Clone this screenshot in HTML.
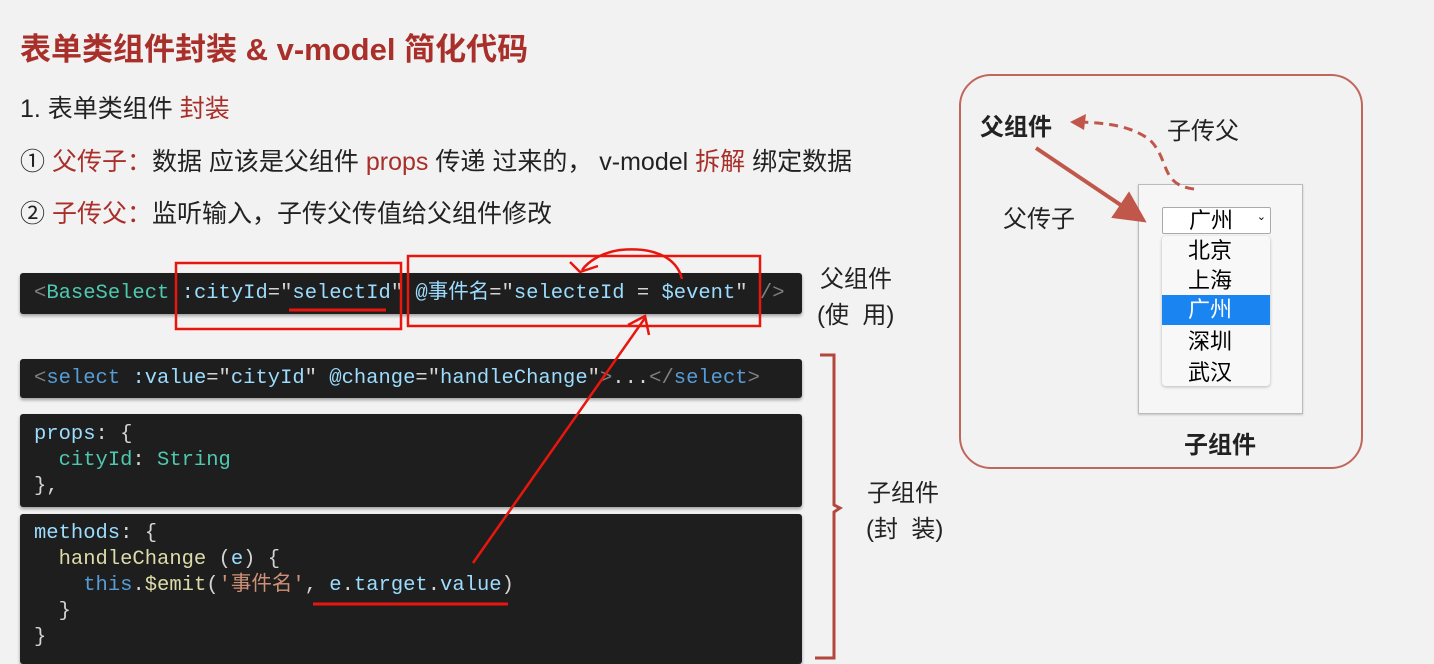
<!DOCTYPE html>
<html><head><meta charset="utf-8"><style>
body{margin:0;width:1434px;height:661px;background:#f2f2f2;position:relative;overflow:hidden;font-family:"Liberation Sans","Noto Sans CJK SC",sans-serif;}
.a{position:absolute;white-space:pre;}
.t{font-size:25px;color:#222;}
.r{color:#a9302a;}
.code{position:absolute;left:20px;width:782px;background:#1e1e1e;box-shadow:0 2px 3px rgba(0,0,0,.35);border-radius:3px;}
.m{position:absolute;left:14px;font-family:"Liberation Mono","Noto Sans CJK SC",monospace;font-size:20.5px;color:#d4d4d4;white-space:pre;line-height:26px;}
.tg{color:#808080}.cp{color:#4ec9b0}.at{color:#9cdcfe}.st{color:#ce9178}.kw{color:#569cd6}.fn{color:#dcdcaa}.sv{color:#9cdcfe}.q{color:#d4d4d4}
</style></head><body>
<div class="a r" style="left:20px;top:24px;font-size:31px;font-weight:bold;">表单类组件封装 &amp; v-model 简化代码</div>
<div class="a t" style="left:20px;top:89px;">1. 表单类组件 <span class="r">封装</span></div>
<div class="a t" style="left:20px;top:142px;">① <span class="r">父传子：</span>数据 应该是父组件 <span class="r">props</span> 传递 过来的， v-model <span class="r">拆解</span> 绑定数据</div>
<div class="a t" style="left:20px;top:194px;">② <span class="r">子传父：</span>监听输入，子传父传值给父组件修改</div>

<div class="code" style="top:273px;height:41px;"><div class="m" style="top:8px;"><span class="tg">&lt;</span><span class="cp">BaseSelect</span> <span class="at">:cityId</span>="<span class="at">selectId</span>" <span class="at">@事件名</span>="<span class="at">selecteId</span> = <span class="at">$event</span>" <span class="tg">/&gt;</span></div></div>
<div class="code" style="top:359px;height:39px;"><div class="m" style="top:7px;"><span class="tg">&lt;</span><span class="kw">select</span> <span class="at">:value</span>="<span class="at">cityId</span>" <span class="at">@change</span>="<span class="at">handleChange</span>"<span class="tg">&gt;</span>...<span class="tg">&lt;/</span><span class="kw">select</span><span class="tg">&gt;</span></div></div>
<div class="code" style="top:414px;height:93px;"><div class="m" style="top:8px;"><span class="sv">props</span>: {
  <span class="cp">cityId</span>: <span class="cp">String</span>
},</div></div>
<div class="code" style="top:514px;height:150px;"><div class="m" style="top:7px;"><span class="sv">methods</span>: {
  <span class="fn">handleChange</span> (<span class="sv">e</span>) {
    <span class="kw">this</span>.<span class="fn">$emit</span>(<span class="st">'事件名'</span>, <span class="sv">e</span>.<span class="sv">target</span>.<span class="sv">value</span>)
  }
}</div></div>

<div class="a t" style="left:820px;top:259px;font-size:24px;">父组件</div>
<div class="a t" style="left:817px;top:295px;font-size:24px;">(使  用)</div>
<div class="a t" style="left:867px;top:473px;font-size:24px;">子组件</div>
<div class="a t" style="left:866px;top:509px;font-size:24px;">(封  装)</div>

<div class="a" style="left:959px;top:74px;width:400px;height:391px;border:2px solid #c0675c;border-radius:32px;"></div>
<div class="a" style="left:1138px;top:184px;width:163px;height:228px;background:#f6f6f6;border:1px solid #bbb;box-shadow:0 1px 2px rgba(0,0,0,.2);"></div>
<div class="a" style="left:1162px;top:207px;width:107px;height:25px;background:#fff;border:1px solid #aaa;border-radius:2px;font-size:22px;line-height:25px;"><span style="position:absolute;left:26px;top:0">广州</span><span style="position:absolute;right:4px;top:-3px;font-size:11px;">⌄</span></div>
<div class="a" style="left:1162px;top:236px;width:108px;height:150px;background:#f8f8f8;border-radius:4px;box-shadow:0 1px 3px rgba(0,0,0,.25);font-size:22px;">
<div style="position:absolute;left:26px;top:0;line-height:30px;">北京<br>上海</div>
<div style="position:absolute;left:0;top:59px;width:108px;height:30px;background:#1a84f0;color:#fff;line-height:30px;"><span style="margin-left:26px">广州</span></div>
<div style="position:absolute;left:26px;top:90px;line-height:31px;">深圳<br>武汉</div>
</div>
<div class="a" style="left:980px;top:107px;font-size:24px;font-weight:bold;color:#222;">父组件</div>
<div class="a" style="left:1167px;top:111px;font-size:24px;color:#222;">子传父</div>
<div class="a" style="left:1003px;top:199px;font-size:24px;color:#222;">父传子</div>
<div class="a" style="left:1184px;top:425px;font-size:24px;font-weight:bold;color:#222;">子组件</div>

<svg class="a" style="left:0;top:0" width="1434" height="661">
<defs><marker id="mh" markerWidth="8" markerHeight="8" refX="6" refY="4" orient="auto"><path d="M0,0 L8,4 L0,8 z" fill="#c0574a"/></marker></defs>
<path d="M1036,148 L1140,218" stroke="#c0574a" stroke-width="4" fill="none" marker-end="url(#mh)"/>
<path d="M1194,189 C1160,185 1170,160 1150,140 C1130,125 1105,123 1080,122" stroke="#c0574a" stroke-width="3" fill="none" stroke-dasharray="9,6"/>
<path d="M1070,122 L1086,114 L1084,130 z" fill="#c0574a"/>
<path d="M820,355 L834,355 L834,505 L840,508 L834,512 L834,658 L815,658" stroke="#b4473c" stroke-width="3" fill="none"/>
<g stroke="#e8160c" stroke-width="2.5" fill="none">
<rect x="176" y="263" width="225" height="66"/>
<rect x="408" y="256" width="352" height="70"/>
<path d="M289,310 L386,310" stroke-width="3"/>
<path d="M313,604 L508,604" stroke-width="3"/>
<path d="M473,563 L645,318"/>
<path d="M628,325 L645,316 L649,335"/>
<path d="M682,279 C676,255 650,247 620,250 C600,253 588,262 582,270 M570,262 L580,272 L598,266"/>
</g>
</svg>
</body></html>
